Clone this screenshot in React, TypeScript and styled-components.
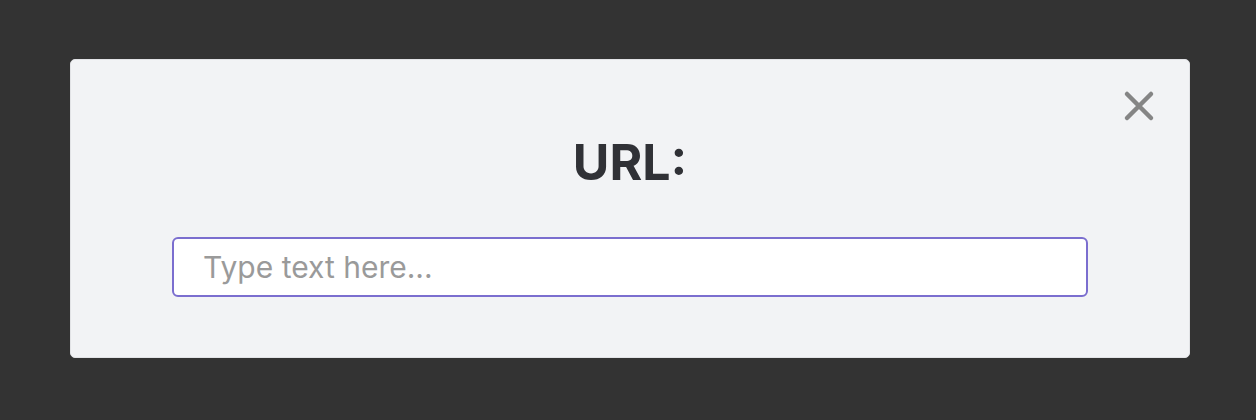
import styled, { createGlobalStyle } from "styled-components";

const GlobalStyle = createGlobalStyle`
  html, body {
    margin: 0;
    padding: 0;
    background: #333333;
    font-family: Inter, "Noto Sans", "Liberation Sans", sans-serif;
  }
`;

const Page = styled.div`
  width: 1256px;
  height: 420px;
  box-sizing: border-box;
  padding: 59px 66px 0 70px;
`;

const Modal = styled.div`
  position: relative;
  width: 1120px;
  height: 299px;
  box-sizing: border-box;
  background: #f2f3f5;
  border: 1px solid #e2e3e6;
  border-radius: 5px;
  display: flex;
  flex-direction: column;
  align-items: center;
  padding-top: 72px;
`;

const CloseButton = styled.button`
  position: absolute;
  top: 30px;
  right: 34px;
  width: 32px;
  height: 32px;
  padding: 0;
  border: none;
  background: transparent;
  cursor: pointer;
  display: flex;
  align-items: center;
  justify-content: center;
`;

const Title = styled.h2`
  margin: 0;
  font-size: 50px;
  line-height: 60px;
  font-weight: 700;
  color: #303136;
`;

const UrlInput = styled.input`
  margin-top: 45px;
  width: 916px;
  height: 60px;
  box-sizing: border-box;
  border: 2px solid #7b6ecf;
  border-radius: 6px;
  background: #ffffff;
  padding: 0 29px;
  font-family: inherit;
  font-size: 30px;
  color: #303136;
  outline: none;
  &::placeholder {
    color: #9a9a9a;
  }
`;

export default function App() {
  return (
    <>
      <GlobalStyle />
      <Page>
        <Modal>
          <CloseButton aria-label="Close">
            <svg width="32" height="32" viewBox="0 0 32 32">
              <path
                d="M4 4 L28 28 M28 4 L4 28"
                stroke="#858585"
                strokeWidth="4.5"
                strokeLinecap="round"
              />
            </svg>
          </CloseButton>
          <Title>URL:</Title>
          <UrlInput placeholder="Type text here..." />
        </Modal>
      </Page>
    </>
  );
}
